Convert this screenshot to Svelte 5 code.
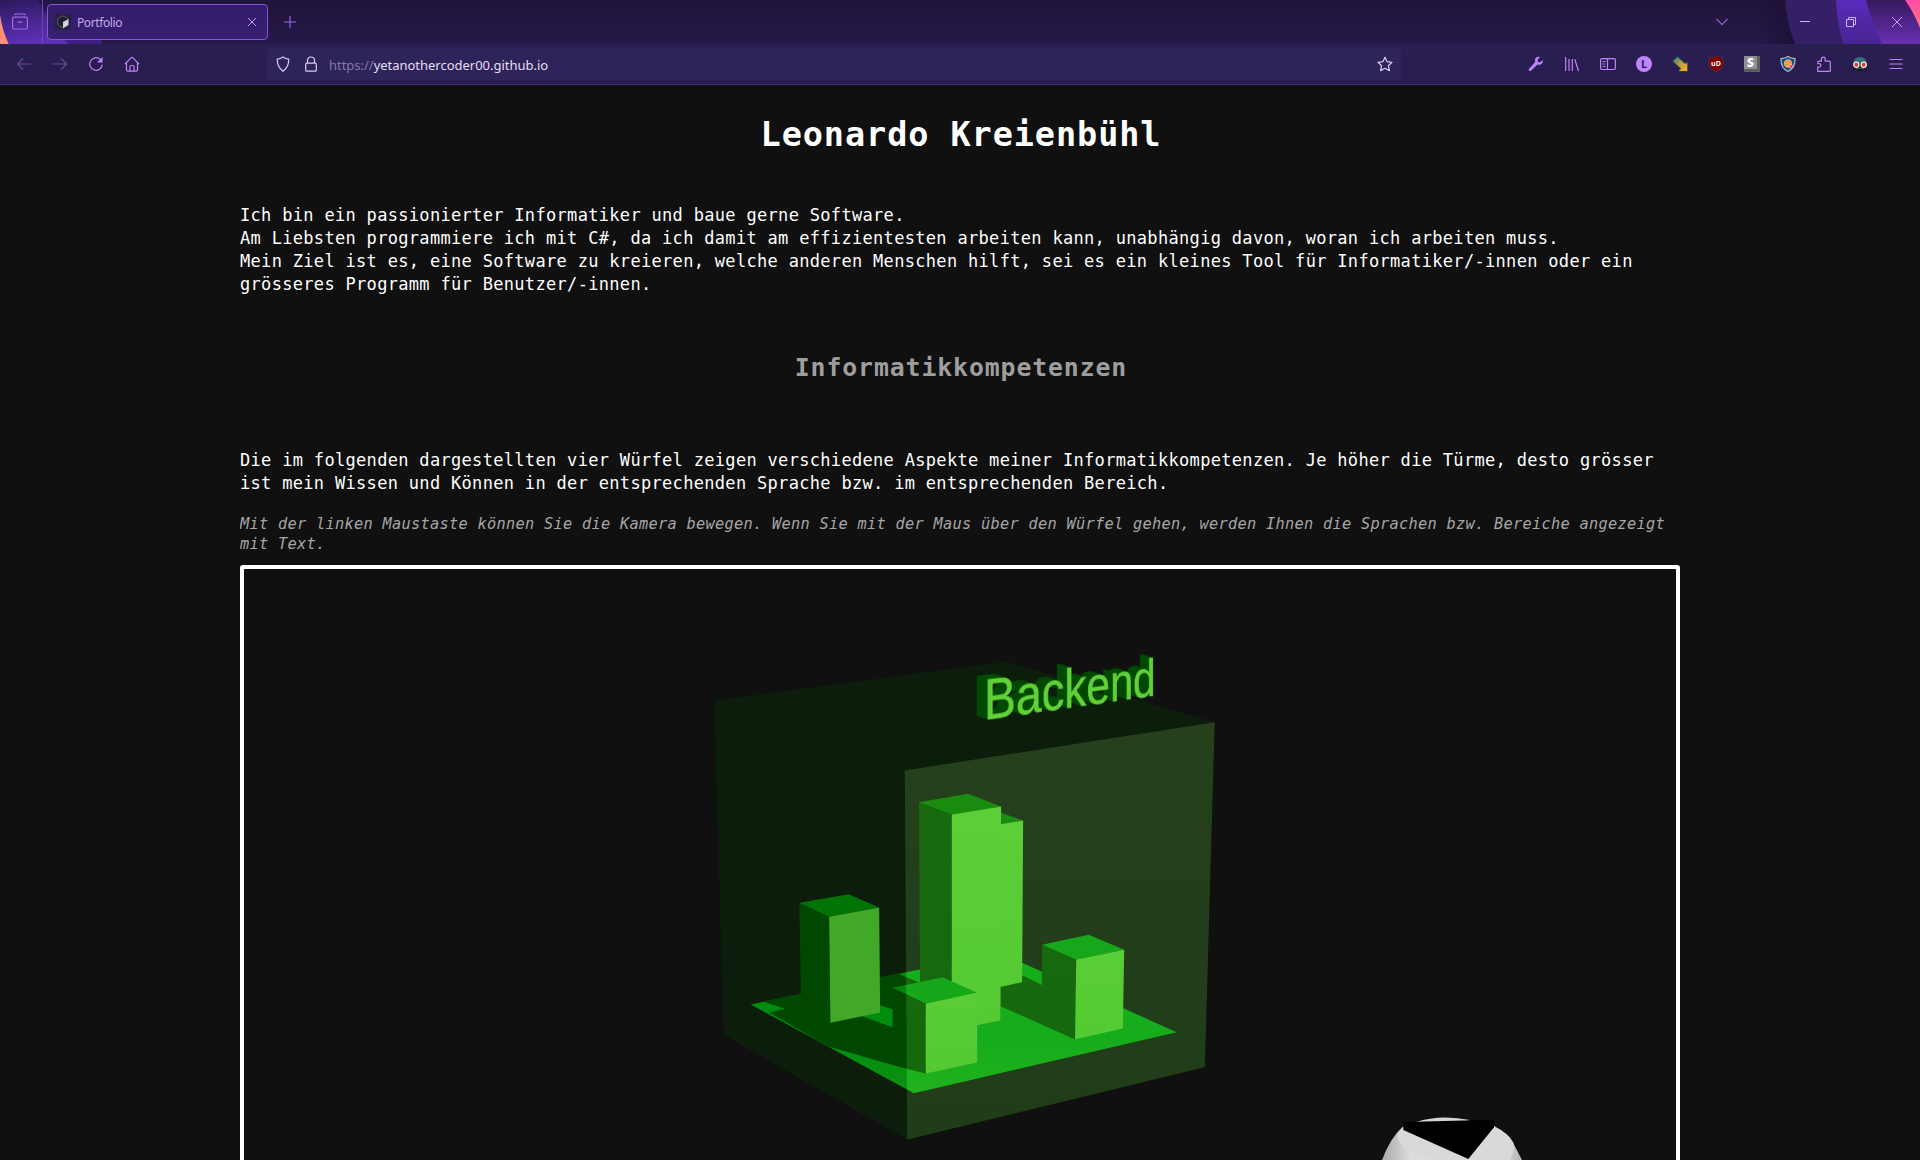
<script>
  const labelShadow = Array.from({ length: 26 }, (_, i) => {
    const k = (i + 1) / 2;
    return `${-k}px ${-k * 0.37}px 0 #004a00`;
  }).join(', ');
</script>

<div class="window">
  <header class="chrome">
    <div class="tabbar">
      <svg class="art art-left" width="110" height="44" viewBox="0 0 330 132" aria-hidden="true">
        <defs>
          <linearGradient id="al" x1="0" y1="0" x2="0.3" y2="1">
            <stop offset="0" stop-color="#2a195c" />
            <stop offset="1" stop-color="#5f2fb8" />
          </linearGradient>
          <linearGradient id="al2" x1="0" y1="0" x2="0" y2="1">
            <stop offset="0" stop-color="#22153f" />
            <stop offset="1" stop-color="#3e2187" />
          </linearGradient>
        </defs>
        <path d="M0 0H240Q285 60 308 132H0z" fill="url(#al2)" />
        <path d="M0 0H115Q150 70 205 132H0z" fill="url(#al)" />
        <path d="M0 45Q8 95 26 132H0z" fill="#ff9077" />
      </svg>
      <svg class="art art-right" width="160" height="44" viewBox="120 0 480 132" aria-hidden="true">
        <defs>
          <linearGradient id="r0"><stop offset="0" stop-color="#1b1036" stop-opacity="0" /><stop offset="1" stop-color="#1b1036" /></linearGradient>
          <linearGradient id="r2" x1="0" y1="0" x2="0" y2="1"><stop offset="0" stop-color="#5a2bb9" /><stop offset="1" stop-color="#492494" /></linearGradient>
          <linearGradient id="r3" x1="0" y1="0" x2="0" y2="1"><stop offset="0" stop-color="#36195f" /><stop offset="1" stop-color="#6a2fb3" /></linearGradient>
          <linearGradient id="r4" x1="0" y1="0" x2="0" y2="1"><stop offset="0" stop-color="#ff4aa5" /><stop offset="1" stop-color="#ff7d7d" /></linearGradient>
        </defs>
        <path d="M120 0H200L230 132H120z" fill="url(#r0)" />
        <path d="M195 0Q200 70 225 132H600V0z" fill="#351f66" />
        <path d="M348 0Q350 70 370 132H600V0z" fill="url(#r2)" />
        <path d="M438 0Q458 75 487 132H600V0z" fill="url(#r3)" />
        <path d="M555 0Q582 38 600 84V0z" fill="url(#r4)" />
      </svg>

      <div class="archive">
        <svg width="18" height="18" viewBox="0 0 18 18" fill="none" stroke="#a36be8" stroke-width="1.2" stroke-linecap="round">
          <path d="M3.6 1.6Q4 1 5 1h8q1 0 1.4.6M1.6 7V5.8Q1.6 4.2 3.2 4.2h11.6q1.6 0 1.6 1.6v8.6q0 1.6-1.6 1.6H3.2q-1.6 0-1.6-1.6zM7 9.2h4" />
        </svg>
      </div>
      <div class="tab">
        <svg class="favicon" width="16" height="16" viewBox="0 0 16 16">
          <rect width="16" height="16" rx="3" fill="#25233d" />
          <path d="M8 1.8 13.2 4.8v6L8 14 2.8 10.8v-6z" fill="#1d1d2b" stroke="#6b6a80" stroke-width=".8" />
          <path d="M8 8 13.4 4.9v6.2L8 14.3z" fill="#d4d2dc" />
        </svg>
        <span class="tab-title">Portfolio</span>
        <svg class="tab-close" width="10" height="10" viewBox="0 0 10 10"><path d="M1 1 9 9M9 1 1 9" stroke="#b79add" stroke-width="1" /></svg>
      </div>
      <svg class="newtab" width="14" height="14" viewBox="0 0 14 14"><path d="M7 1v12M1 7h12" stroke="#a264e6" stroke-width="1.1" /></svg>
      <div class="wincontrols">
        <svg width="12" height="12" viewBox="0 0 12 12"><path d="M.5 3 6 8.6 11.5 3" fill="none" stroke="#9460d4" stroke-width="1.1" /></svg>
        <svg class="min" width="10" height="10" viewBox="0 0 10 10"><path d="M0 4.5h10" stroke="#cbb5ee" /></svg>
        <svg width="10" height="10" viewBox="0 0 10 10"><path d="M.5 2.5h7v7h-7zM2.5 2.5v-2h7v7h-2" fill="none" stroke="#cbb5ee" /></svg>
        <svg width="10" height="10" viewBox="0 0 10 10"><path d="M0 0 10 10M10 0 0 10" stroke="#cbb5ee" stroke-width=".9" /></svg>
      </div>
    </div>

    <div class="toolbar">
      <nav class="nav">
        <svg class="dim" viewBox="0 0 16 16"><path d="M15 8H1.5M7 2.5 1.5 8 7 13.5" /></svg>
        <svg class="dim" viewBox="0 0 16 16"><path d="M1 8h13.500M9 2.500 14.500 8 9 13.500" /></svg>
        <svg viewBox="0 0 16 16"><path d="M12.200 3.300A6.300 6.300 0 1 0 14.300 8.600" /><path class="solid" d="M14.500 1v5.500H9z" /></svg>
        <svg viewBox="0 0 16 16"><path d="M1 8 7.300 1.700q.7-.6 1.400 0L15 8M2.500 6.800v7q0 1.400 1.400 1.400h8.200q1.400 0 1.400-1.400v-7M6 15v-4.500q0-1 1-1h2q1 0 1 1V15" /></svg>
      </nav>
      <div class="urlbar">
        <svg viewBox="0 0 16 16"><path d="M8 .9Q10.500 2.800 13.700 3.100 14 11 8 15.200 2 11 2.300 3.100 5.500 2.800 8 .9z" /></svg>
        <svg class="lock" viewBox="0 0 16 16"><path d="M4.500 7V4.500a3.500 3.500 0 0 1 7 0V7M3.700 7.200h8.600q1 0 1 1v6q0 1-1 1H3.700q-1 0-1-1v-6q0-1 1-1z" /></svg>
        <span class="url"><span class="proto">https://</span>yetanothercoder00.github.io</span>
        <svg class="star" viewBox="0 0 16 16"><path stroke-linejoin="round" d="M8 1.200 10.100 5.700 15 6.300 11.400 9.700 12.400 14.600 8 12.200 3.600 14.600 4.600 9.700 1 6.300 5.900 5.700z" /></svg>
      </div>
      <div class="extensions">
        <svg viewBox="0 0 16 16"><path class="solid" d="M14.800 3.900 12.200 6.300 10 5.900 9.600 3.700 12 1.100C10 .4 7.800 1.300 7.100 3.200c-.4 1-.3 2 .1 2.900L.9 12.900c-.8.900.8 3 2.100 1.800l6.600-6.300c3 1.200 6-1.600 5.200-4.500z" /></svg>
        <svg viewBox="0 0 16 16"><path d="M1.700 1v14M5 3v12M8.300 3v12M10.800 3.200 14.500 15" /></svg>
        <svg viewBox="0 0 16 16"><path d="M2 2.700h12q1.400 0 1.400 1.400v8q0 1.400-1.400 1.400H2q-1.400 0-1.400-1.400v-8Q.6 2.700 2 2.700zM7.500 2.700v10.800M2.500 5.500h3M2.500 8h3M2.500 10.500h3" /></svg>
        <span class="avatar">L</span>
        <svg viewBox="0 0 16 16">
          <defs><linearGradient id="arrow" x1="0" y1="0" x2="1" y2="1"><stop offset="0" stop-color="#2d7d8c" /><stop offset=".5" stop-color="#c79a3a" /><stop offset="1" stop-color="#ffae10" /></linearGradient></defs>
          <path d="M5.500 0 13.500 7 15.800 5.500V15.500H6L8 12.500 .2 5.500z" fill="#16566e" stroke="none" /><path d="M1 5 5.500 1.200 13 8 15.200 7V15H7L9.300 12.500z" fill="url(#arrow)" stroke="none" />
        </svg>
        <span class="ublock">
          <svg viewBox="0 0 16 16"><path d="M8 0Q11 1.800 15 2v6Q14.500 13 8 16 1.500 13 1 8V2Q5 1.800 8 0z" fill="#800000" stroke="#5b3540" stroke-width=".6" /></svg>
          <span>uD</span>
        </span>
        <span class="stylus">S</span>
        <svg viewBox="0 0 16 16"><path d="M8 .6Q11 2.500 15 2.600 15.500 12 8 15.500.5 12 1 2.600 5 2.500 8 .6z" fill="#07538f" stroke="#b5bac4" stroke-width="1.200" /><circle cx="8" cy="7.500" r="4.200" fill="#f2a35c" stroke="none" /><path d="M6 5.500h2M9 7h2M6 8.500h2" stroke="#d67b36" stroke-width=".8" /><circle cx="11" cy="10.500" r="1.700" fill="#e02b2b" stroke="#eee" stroke-width=".6" /></svg>
        <svg viewBox="0 0 16 16"><path d="M1.800 15.300V11h1.400a1.700 1.700 0 0 0 0-3.400H1.800V6q0-.9.900-.9h2.700V3a1.900 1.900 0 0 1 3.800 0v2.100h4.200q.9 0 .9.900v8.400q0 .9-.9.900z" /></svg>
        <svg viewBox="0 0 16 16"><path d="M1.500 8Q1.500 1 8 1t6.500 7z" fill="#2f6f80" stroke="none" /><path d="M1 7h14l-1 8H2z" fill="#171721" stroke="none" /><path d="M4 14.500v-2h8v2" stroke="#667" fill="none" stroke-width=".7" /><g fill="#c8433a" stroke="#f0e6df" stroke-width="1.300"><circle cx="4.300" cy="8.800" r="2.600" /><circle cx="11.700" cy="8.800" r="2.600" /></g></svg>
        <svg viewBox="0 0 16 16"><path d="M2 3.500h12M2 8h12M2 12.500h12" stroke-linecap="round" /></svg>
      </div>
    </div>
  </header>

  <main>
    <h1>Leonardo Kreienbühl</h1>
    <p class="intro">
      Ich bin ein passionierter Informatiker und baue gerne Software.<br />
      Am Liebsten programmiere ich mit C#, da ich damit am effizientesten arbeiten kann, unabhängig davon, woran ich arbeiten muss.<br />
      Mein Ziel ist es, eine Software zu kreieren, welche anderen Menschen hilft, sei es ein kleines Tool für Informatiker/-innen oder ein grösseres Programm für Benutzer/-innen.
    </p>
    <h2>Informatikkompetenzen</h2>
    <p class="about">
      Die im folgenden dargestellten vier Würfel zeigen verschiedene Aspekte meiner Informatikkompetenzen. Je höher die Türme, desto grösser ist mein Wissen und Können in der entsprechenden Sprache bzw. im entsprechenden Bereich.
    </p>
    <p class="hint">
      Mit der linken Maustaste können Sie die Kamera bewegen. Wenn Sie mit der Maus über den Würfel gehen, werden Ihnen die Sprachen bzw. Bereiche angezeigt mit Text.
    </p>

    <div class="scene">
      <svg width="1432" height="591" viewBox="0 0 1432 591">
        <defs>
          <linearGradient id="floor" x1="0" y1="0" x2="0" y2="1"><stop offset=".3" stop-color="#008c0e" /><stop offset=".6" stop-color="#008c0e" /><stop offset="1" stop-color="#0c9311" /></linearGradient>
          <linearGradient id="glass" x1="0" y1="0" x2="0" y2="1"><stop offset="0" stop-color="#1a2310" /><stop offset="1" stop-color="#141f0c" /></linearGradient>
          <linearGradient id="front" x1="0" y1="0" x2="0" y2="1"><stop offset="0" stop-color="#43ad29" /><stop offset="1" stop-color="#3faa25" /></linearGradient>
          <linearGradient id="body"><stop offset="0" stop-color="#a8a8a8" /><stop offset=".2" stop-color="#dcdcdc" /><stop offset=".85" stop-color="#d8d8d8" /><stop offset="1" stop-color="#b4b4b4" /></linearGradient>
        </defs>
        <g class="cube" transform="translate(456 70.500) scale(.338 .33333)">
          <path fill="#0c1d0c" d="M42 183 905 66 1523 248 1494 1283 613 1501 70 1186z" />
          <path fill="url(#floor)" d="M150 1095 887 940 1410 1178 633 1361z" />
          <path fill="#004800" d="M185 1086 585 1002 650 1030 889 1030 953 1007 1010 1036 1110 1199 889 1100 889 1143 820 1158 700 1130 570 1110 533 1097 480 1130 570 1163 650 1200 668 1302Q560 1275 480 1250 430 1235 380 1222L205 1119 252 1108z" />
          <path fill="#006a05" d="M891 520 956 543 891 554z" />
          <path fill="url(#front)" d="M885 555 956 543 953 1028 885 1043z" />
          <path fill="#004800" d="M648 488 745 525V1090L651 1060z" />
          <path fill="#006a00" d="M648 488 793 463 891 501 745 525z" />
          <path fill="url(#front)" d="M745 525 891 501 889 1143 745 1174z" />
          <path fill="#004800" d="M294 790 382 832 386 1150 299 1105z" />
          <path fill="#007404" d="M294 790 440 764 530 804 382 832z" />
          <path fill="#41a927" d="M382 832 530 804 533 1119 386 1150z" />
          <path fill="#004800" d="M1012 916 1113 960 1110 1199 1010 1155z" />
          <path fill="#00860c" d="M1012 916 1150 886 1255 931 1113 960z" />
          <path fill="url(#front)" d="M1113 960 1255 931 1251 1167 1110 1199z" />
          <path fill="#004800" d="M570 1045 668 1092V1302L570 1255z" />
          <path fill="#00860c" d="M570 1045 718 1013 820 1060 668 1092z" />
          <path fill="url(#front)" d="M668 1092 820 1060V1269L668 1302z" />
          <path class="pane" fill="url(#glass)" d="M606 393 1523 248 1494 1283 613 1501z" />
        </g>
        <g transform="translate(1116 531) scale(.33333)">
          <path fill="url(#body)" d="M66 180Q90 115 128 80L402 78Q445 100 460 130L486 180z" />
          <path fill="#d9d9d9" d="M128 84Q100 105 122 130 150 162 235 180H450Q466 150 460 128 445 98 402 80z" />
          <path fill="#d3d8d5" d="M168 66Q240 42 330 60L300 72 180 72z" />
          <path fill="#000" d="M130 66 402 59V82L325 177 130 90z" />
        </g>
      </svg>
      <div class="label" style:text-shadow={labelShadow}>Backend</div>
    </div>
  </main>
</div>

<style>
  :global(body) { margin: 0; background: #101010; overflow: hidden; }
  .window { width: 1920px; height: 1160px; overflow: hidden; display: flex; flex-direction: column; background: #101010; }
  .chrome { font-family: "Noto Sans", "Open Sans", sans-serif; flex: none; }
  .tabbar { position: relative; height: 44px; display: flex; align-items: center; background: linear-gradient(#20143a, #26194a); }
  .tabbar > * { position: relative; }
  .tabbar > .art { position: absolute; top: 0; }
  .art-left { left: 0; }
  .art-right { right: 0; }
  .archive { width: 43px; height: 44px; box-sizing: border-box; border-right: 1px solid #6a4a9e; display: flex; align-items: center; padding-left: 11px; }
  .tab { box-sizing: border-box; width: 221px; height: 36px; margin-left: 4px; border: 1px solid #8b52dc; border-radius: 4px; background: linear-gradient(#331c68, #381f74); display: flex; align-items: center; padding: 0 10px 0 7px; }
  .tab-title { margin-left: 6px; padding-top: 1px; font-size: 12px; letter-spacing: -0.4px; color: #c3abe4; flex: 1; }
  .newtab { margin-left: 15px; }
  .wincontrols { margin-left: auto; margin-right: 18px; display: flex; align-items: center; gap: 36px; }
  .wincontrols .min { margin-left: 36px; }

  .toolbar { height: 40px; border-bottom: 1px solid #40307c; background: linear-gradient(#2a1f51, #291c4f); display: flex; align-items: center; }
  .toolbar svg { width: 16px; height: 16px; fill: none; stroke: #c084fa; stroke-width: 1.2; flex: none; }
  .toolbar .solid { fill: #c084fa; stroke: none; }
  .toolbar .dim { stroke: #6d4794; }
  .nav { display: flex; gap: 20px; padding-left: 16px; width: 251px; }
  .urlbar { width: 1134px; height: 32px; box-sizing: border-box; border-radius: 4px; background: #2e2459; display: flex; align-items: center; padding: 0 8px; }
  .urlbar svg { stroke: #d9ccf2; }
  .urlbar .lock { margin-left: 12px; }
  .url { margin-left: 10px; padding-top: 1px; flex: 1; font-size: 13px; letter-spacing: -0.02px; color: #e6def5; }
  .proto { color: #8576ae; }
  .extensions { display: flex; gap: 20px; margin-left: auto; padding-right: 16px; }
  .avatar { width: 16px; height: 16px; border-radius: 50%; background: #c084fa; color: #2a1f51; font: bold 11px/16px "Open Sans", sans-serif; text-align: center; }
  .ublock { display: grid; width: 16px; height: 16px; }
  .ublock > * { grid-area: 1 / 1; }
  .ublock span { z-index: 1; font: 700 7px/15px "Open Sans", sans-serif; color: #fff; text-align: center; }
  .stylus { box-sizing: border-box; width: 16px; height: 16px; background: #8e9094; border-right: 3px solid #5c5e60; border-bottom: 3px solid #5c5e60; color: #fff; font: 800 12px/13px "Open Sans", sans-serif; text-align: center; }

  main { width: 1440px; margin: 0 auto; flex: 1; min-height: 0; overflow: hidden; font-family: "DejaVu Sans Mono", "Liberation Mono", monospace; color: #fff; }
  h1, h2, p { margin: 0; }
  h1 { margin-top: 27px; padding-left: 2px; font-size: 33.5px; line-height: 45px; letter-spacing: 0.93px; text-align: center; }
  h2 { margin-top: 54px; padding-left: 2px; font-size: 24.8px; line-height: 35px; letter-spacing: 0.9px; text-align: center; color: #9e9e9e; }
  .intro, .about { font-size: 17px; line-height: 23px; letter-spacing: 0.316px; }
  .intro { margin-top: 47px; }
  .about { margin-top: 64px; }
  .hint { margin-top: 19px; font-size: 15.3px; line-height: 20px; letter-spacing: 0.29px; font-style: italic; color: #a6a6a6; }

  .scene { position: relative; box-sizing: border-box; margin-top: 11px; height: 700px; border: 4px solid #fff; border-radius: 3px; }
  .scene svg { display: block; }
  .cube { isolation: isolate; }
  .pane { mix-blend-mode: plus-lighter; }
  .label { position: absolute; left: 739.6px; top: 101px; font: 57px/60px "Liberation Sans", Arial, sans-serif; color: #60d238; -webkit-text-stroke: 0.5px #60d238; white-space: nowrap; transform-origin: 0 49.75px; transform: matrix3d(0.856, -0.1227, 0, 0.00048, 0, 1, 0, 0, 0, 0, 1, 0, 0, 0, 0, 1); }
</style>
